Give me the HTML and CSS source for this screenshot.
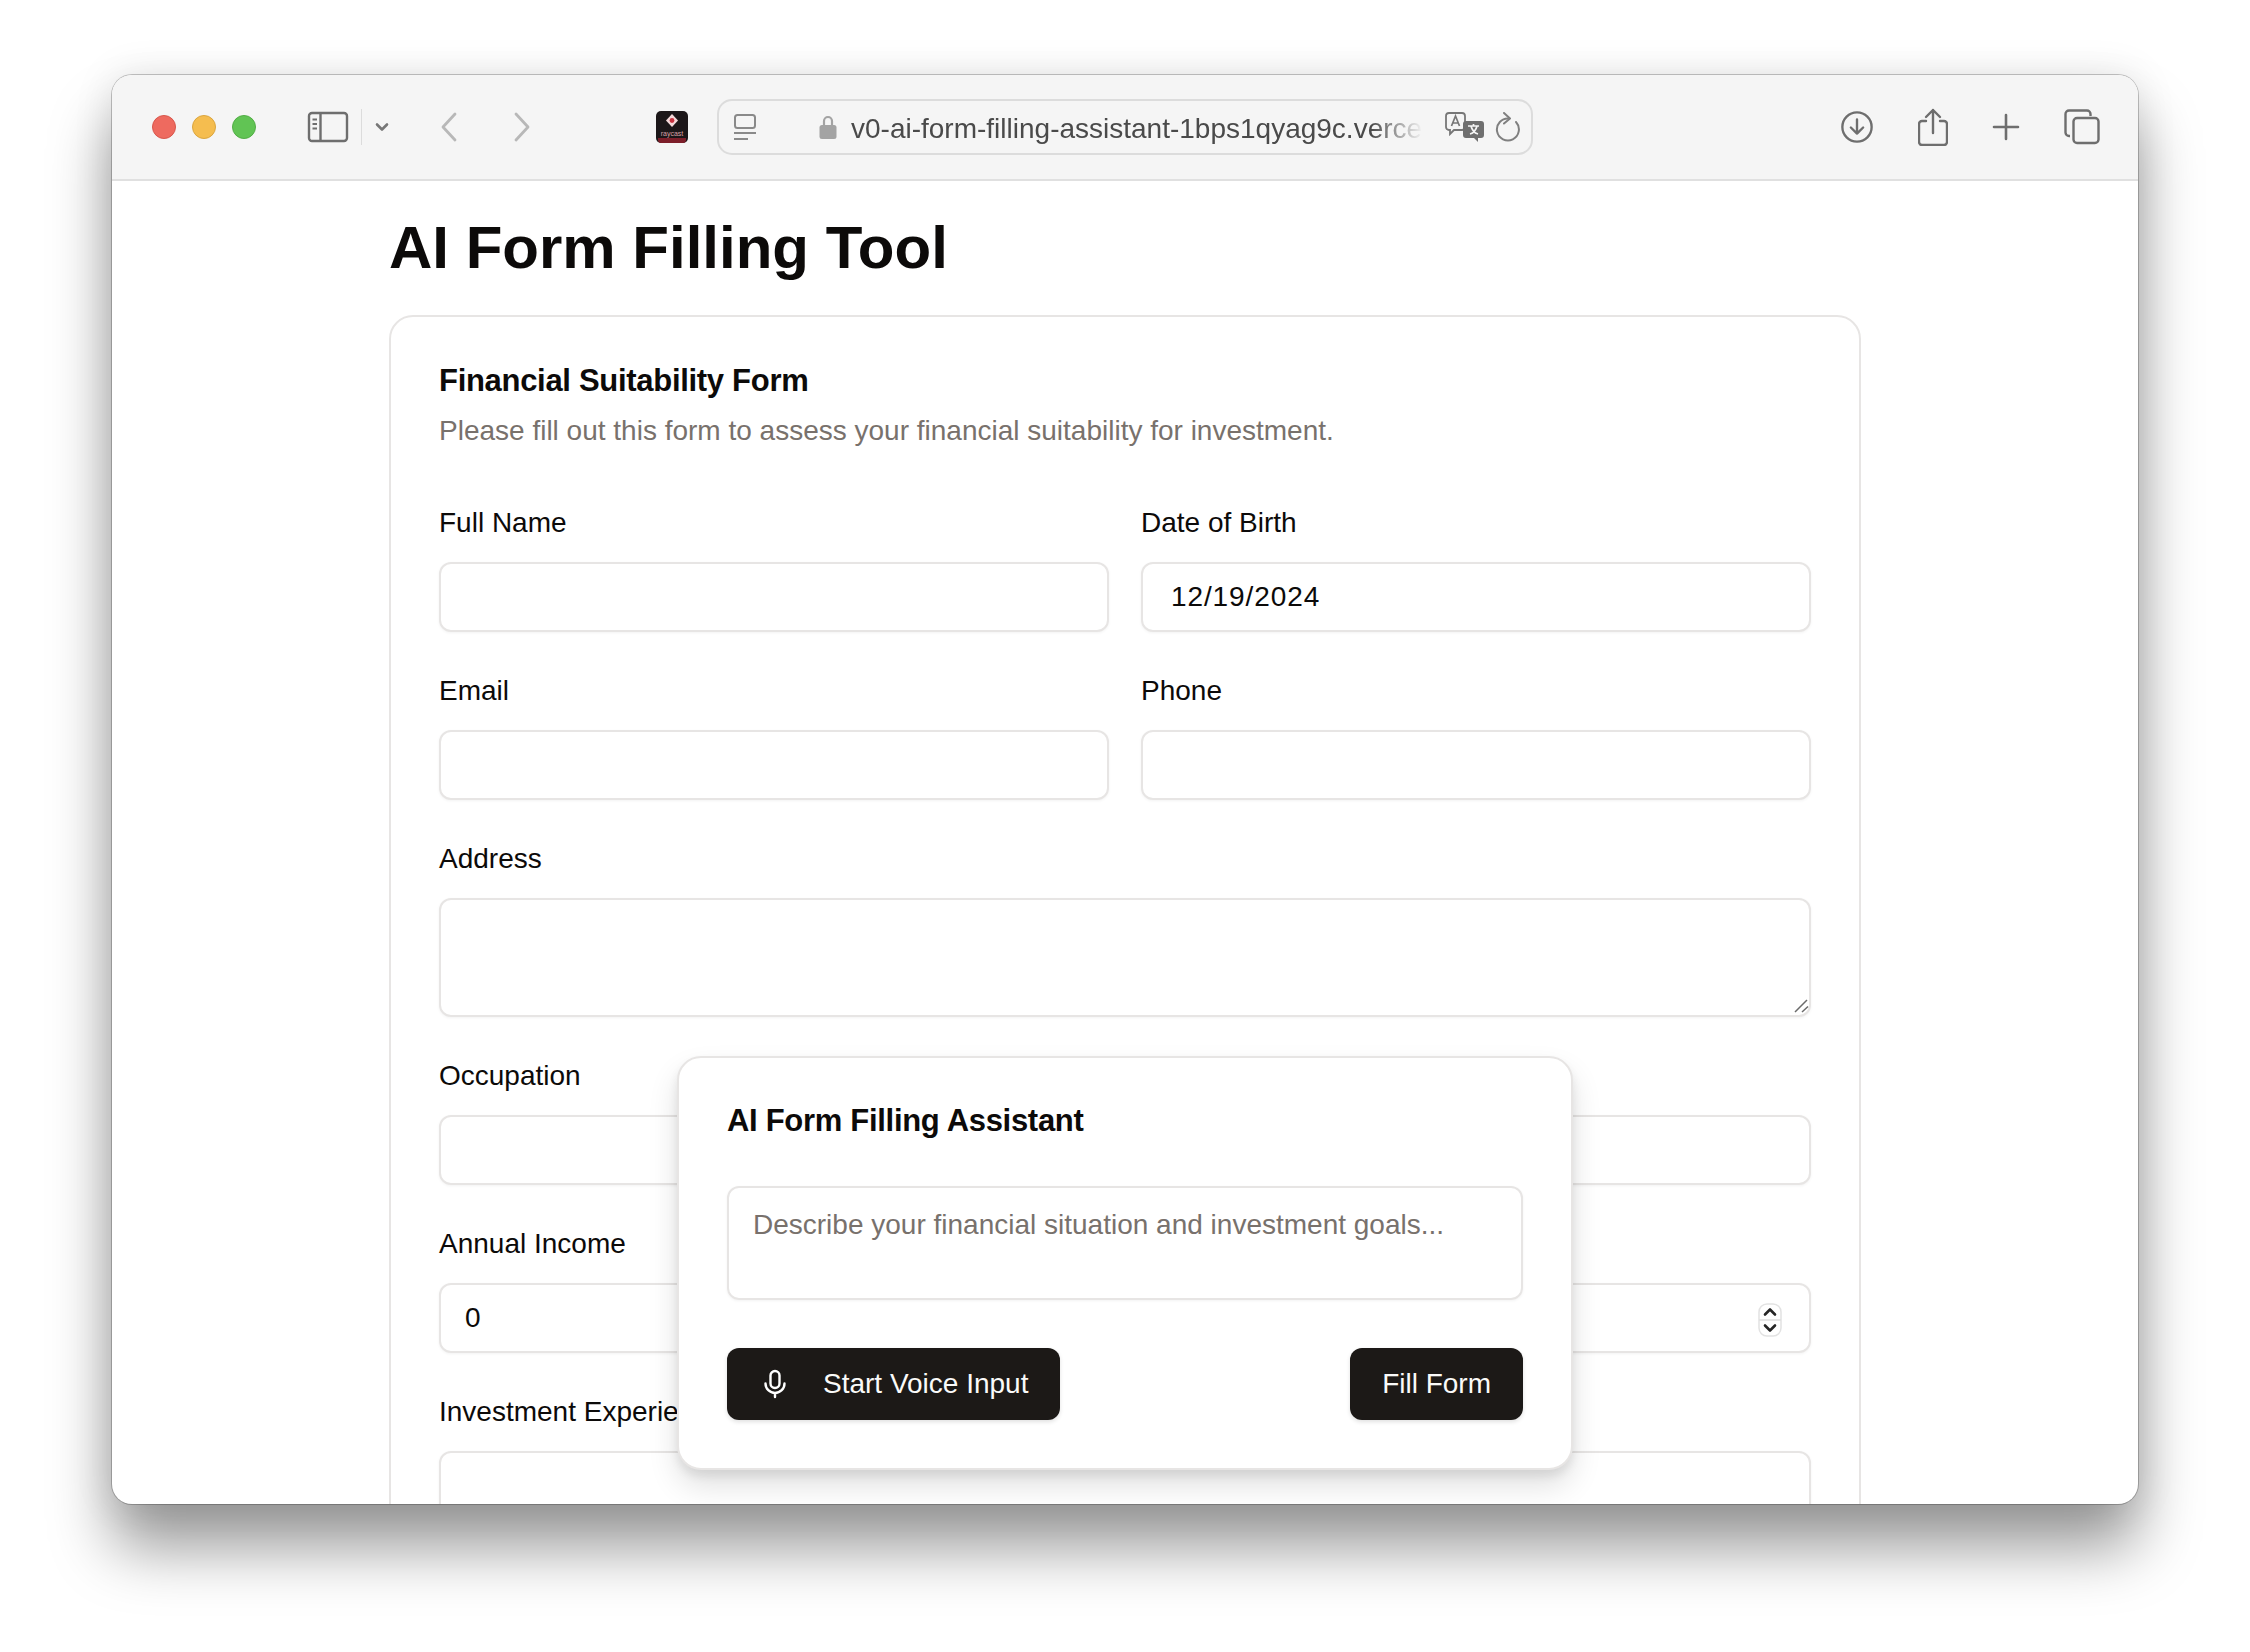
FILE: index.html
```html
<!DOCTYPE html>
<html lang="en">
<head>
<meta charset="utf-8">
<title>AI Form Filling Tool</title>
<link rel="stylesheet" href="styles.css">
</head>
<body>
<div class="window">
  <header class="toolbar">
    <div class="lights">
      <span class="light red"></span><span class="light yellow"></span><span class="light green"></span>
    </div>
    <svg class="ic sidebar" width="42" height="32" viewBox="0 0 42 32" fill="none" stroke="#6e6e6e" stroke-width="2.4"><rect x="2" y="2" width="38" height="28" rx="3"/><path d="M13.5 2v28"/><path d="M5.5 8.5h4.5M5.500 13h4.500M5.500 17.500h4.500" stroke-width="2"/></svg>
    <span class="sep"></span>
    <svg class="ic chev" width="14" height="10" viewBox="0 0 14 10" fill="none" stroke="#777" stroke-width="2.6" stroke-linecap="round" stroke-linejoin="round"><path d="M2 2.500l5 5 5-5"/></svg>
    <svg class="ic back" width="16" height="30" viewBox="0 0 16 30" fill="none" stroke="#b8b8b8" stroke-width="2.8" stroke-linecap="round" stroke-linejoin="round"><path d="M14 2L2 15l12 13"/></svg>
    <svg class="ic fwd" width="16" height="30" viewBox="0 0 16 30" fill="none" stroke="#b8b8b8" stroke-width="2.8" stroke-linecap="round" stroke-linejoin="round"><path d="M2 2l12 13L2 28"/></svg>
    <svg class="ic ray" width="32" height="32" viewBox="0 0 32 32"><rect width="32" height="32" rx="5" fill="#1c1719"/><path d="M2 27h28v2a3 3 0 0 1-3 3H5a3 3 0 0 1-3-3z" fill="#7d1f2a"/><path d="M16 3l6 6.500-6 6.500-6-6.500z" fill="#f4d9da"/><circle cx="16" cy="9.500" r="2.400" fill="#c8323f"/><text x="16" y="25" text-anchor="middle" font-size="7" font-family="Liberation Sans" fill="#d9a0a5">raycast</text></svg>
    <div class="urlbar">
      <svg class="ic reader" width="24" height="28" viewBox="0 0 24 28" fill="none" stroke="#8a8a8a" stroke-width="2"><rect x="2" y="2" width="20" height="13" rx="2.500"/><path d="M1 20h22M1 26h14"/></svg>
      <svg class="ic lock" width="18" height="26" viewBox="0 0 18 26"><path d="M5 12V7a4 4 0 0 1 8 0v5" fill="none" stroke="#a3a3a3" stroke-width="2.200"/><rect x="0.500" y="11" width="17" height="14" rx="2.500" fill="#a3a3a3"/></svg>
      <span class="url">v0-ai-form-filling-assistant-1bps1qyag9c.vercel</span>
      <svg class="ic translate" width="40" height="30" viewBox="0 0 40 30"><path d="M4 1h13a3 3 0 0 1 3 3v11a3 3 0 0 1-3 3H9l-4 4v-4H4a3 3 0 0 1-3-3V4a3 3 0 0 1 3-3z" fill="none" stroke="#777" stroke-width="1.800"/><path d="M6.500 14l4-10 4 10M8 11h5" fill="none" stroke="#777" stroke-width="1.700"/><path d="M21 9h15a3 3 0 0 1 3 3v11a3 3 0 0 1-3 3h-3v4l-4-4h-8a3 3 0 0 1-3-3V12a3 3 0 0 1 3-3z" fill="#6f6f6f"/><path d="M23 14h11M28.500 12v2M26 14c1 4 3.500 7 7 8M32 14c-1 4-3.500 7-7 8" fill="none" stroke="#f5f5f5" stroke-width="1.700"/></svg>
      <svg class="ic reload" width="26" height="30" viewBox="0 0 26 30" fill="none" stroke="#808080" stroke-width="2" stroke-linecap="round" stroke-linejoin="round"><path d="M15 6.500A11 11 0 1 0 22 10"/><path d="M10 1l6 5.500-6 5"/></svg>
    </div>
    <div class="actions">
      <svg class="ic" width="34" height="34" viewBox="0 0 36 36" fill="none" stroke="#6e6e6e" stroke-width="2.500" stroke-linecap="round" stroke-linejoin="round"><circle cx="18" cy="18" r="15.500"/><path d="M18 10v15M11.500 18.500L18 25l6.500-6.500"/></svg>
      <svg class="ic" width="30" height="38" viewBox="0 0 30 38" fill="none" stroke="#6e6e6e" stroke-width="2.400" stroke-linecap="round" stroke-linejoin="round"><path d="M8 13H4a3 3 0 0 0-3 3v18a3 3 0 0 0 3 3h22a3 3 0 0 0 3-3V16a3 3 0 0 0-3-3h-4"/><path d="M15 25V2M8 9l7-7 7 7"/></svg>
      <svg class="ic" width="28" height="28" viewBox="0 0 28 28" fill="none" stroke="#6e6e6e" stroke-width="2.600" stroke-linecap="round"><path d="M14 2v24M2 14h24"/></svg>
      <svg class="ic" width="36" height="36" viewBox="0 0 36 36" fill="none" stroke="#6e6e6e" stroke-width="2.400"><path d="M6 27H5a3.500 3.500 0 0 1-3.500-3.500V5A3.500 3.500 0 0 1 5 1.500h18A3.500 3.500 0 0 1 26.500 5v2"/><rect x="9.500" y="9" width="25" height="25" rx="3.500"/></svg>
    </div>
  </header>

  <main class="page">
    <h1 class="title">AI Form Filling Tool</h1>
    <section class="card">
      <h2 class="card-title">Financial Suitability Form</h2>
      <p class="card-sub">Please fill out this form to assess your financial suitability for investment.</p>
      <form class="grid">
        <div class="field"><label class="label">Full Name</label><input class="input" type="text"></div>
        <div class="field"><label class="label">Date of Birth</label><input class="input date" type="text" value="12/19/2024"></div>
        <div class="field"><label class="label">Email</label><input class="input" type="text"></div>
        <div class="field"><label class="label">Phone</label><input class="input" type="text"></div>
        <div class="field wide"><label class="label">Address</label>
          <div class="overlay-wrap"><textarea class="input area"></textarea>
            <svg class="grip" width="16" height="16" viewBox="0 0 16 16" fill="none" stroke="#6b6b6b" stroke-width="1.500"><path d="M1 13L13 1M8 13l6-5.500"/></svg>
          </div>
        </div>
        <div class="field"><label class="label">Occupation</label><input class="input" type="text"></div>
        <div class="field"><label class="label">&nbsp;</label><input class="input" type="text"></div>
        <div class="field"><label class="label">Annual Income</label><input class="input" type="text" value="0"></div>
        <div class="field"><label class="label">&nbsp;</label>
          <div class="overlay-wrap"><input class="input" type="text">
            <svg class="spin" width="24" height="34" viewBox="0 0 24 34" fill="#fff"><rect x="1" y="1" width="22" height="32" rx="8" stroke="#e2e2e2" stroke-width="1.500"/><path d="M1 17h22" stroke="#dedede" stroke-width="1.500"/><path d="M7 11.500L12 6.500l5 5M7 22.500L12 27.500l5-5" fill="none" stroke="#262626" stroke-width="2.600" stroke-linecap="round" stroke-linejoin="round"/></svg>
          </div>
        </div>
        <div class="field wide"><label class="label">Investment Experience</label><input class="input" type="text"></div>
      </form>
    </section>

    <aside class="assistant">
      <h2 class="assistant-title">AI Form Filling Assistant</h2>
      <div class="prompt">Describe your financial situation and investment goals...</div>
      <div class="assistant-actions">
        <button class="btn voice" type="button">
          <svg width="24" height="30" viewBox="0 0 24 30" fill="none" stroke="#fff" stroke-width="2.400" stroke-linecap="round" stroke-linejoin="round"><rect x="7.500" y="2" width="9" height="17" rx="4.500"/><path d="M2.500 14.500a9.500 9.500 0 0 0 19 0M12 24v4"/></svg>
          <span>Start Voice Input</span>
        </button>
        <button class="btn" type="button">Fill Form</button>
      </div>
    </aside>
  </main>
</div>
</body>
</html>
```

FILE: styles.css
```css
* { box-sizing: border-box; }
html, body { margin: 0; padding: 0; }
body {
  width: 2250px;
  height: 1652px;
  padding: 75px 112px 0;
  background: #fff;
  font-family: "Liberation Sans", Arial, sans-serif;
  overflow: hidden;
}
.window {
  width: 2026px;
  height: 1429px;
  background: #fff;
  border-radius: 20px;
  overflow: hidden;
  display: flex;
  flex-direction: column;
  box-shadow: 0 0 0 1px rgba(0,0,0,.22), 0 44px 62px rgba(0,0,0,.4), 0 0 40px rgba(0,0,0,.1);
}
.toolbar {
  height: 106px;
  flex: none;
  display: flex;
  align-items: center;
  background: #f5f5f5;
  border-bottom: 2px solid #e0e0e0;
}
.ic { flex: none; display: block; }
.lights { display: flex; gap: 16px; margin-left: 40px; }
.light { width: 24px; height: 24px; border-radius: 50%; }
.red { background: #ee6a5f; border: 1px solid #d8574c; }
.yellow { background: #f5bd4f; border: 1px solid #dba63f; }
.green { background: #61c454; border: 1px solid #52ad46; }
.sidebar { margin-left: 51px; }
.sep { width: 1px; height: 36px; background: #dcdcdc; margin-left: 12px; }
.chev { margin-left: 13px; }
.back { margin-left: 52px; }
.fwd { margin-left: 57px; }
.ray { margin-left: 126px; }
.urlbar {
  width: 816px;
  height: 56px;
  margin-left: 29px;
  display: flex;
  align-items: center;
  border: 2px solid #dcdcdc;
  border-radius: 15px;
  padding: 0 10px 0 14px;
}
.lock { margin-left: 62px; }
.url {
  width: 572px;
  margin-left: 14px;
  margin-top: 3px;
  flex: none;
  font-size: 28px;
  line-height: 36px;
  color: #4a4a4a;
  white-space: nowrap;
  -webkit-mask-image: linear-gradient(90deg, #000 91%, transparent 100%);
  mask-image: linear-gradient(90deg, #000 91%, transparent 100%);
}
.translate { margin-left: 22px; }
.reload { margin-left: 9px; }
.actions {
  display: flex;
  align-items: center;
  gap: 44px;
  margin-left: auto;
  margin-right: 38px;
}
.page {
  position: relative;
  flex: 1;
  min-height: 0;
  padding: 0 277px;
  overflow: hidden;
}
.title {
  margin: 0;
  padding-top: 33px;
  height: 134px;
  font-size: 60px;
  line-height: 68px;
  font-weight: 700;
  color: #0c0a09;
}
.card {
  border: 2px solid #e7e5e4;
  border-radius: 24px;
  padding: 42px 48px 48px;
  background: #fff;
}
.card-title {
  margin: 0;
  font-size: 31px;
  line-height: 44px;
  font-weight: 700;
  color: #0c0a09;
  letter-spacing: -0.3px;
}
.card-sub {
  margin: 8px 0 0;
  font-size: 28px;
  line-height: 40px;
  color: #78716c;
}
.grid {
  display: grid;
  grid-template-columns: 1fr 1fr;
  column-gap: 32px;
  row-gap: 45px;
  margin-top: 58px;
}
.field { display: flex; flex-direction: column; min-width: 0; }
.wide { grid-column: 1 / 3; }
.label {
  height: 28px;
  font-size: 28px;
  line-height: 28px;
  color: #0c0a09;
  margin-bottom: 25px;
}
.input {
  display: block;
  width: 100%;
  height: 70px;
  padding: 0 24px;
  border: 2px solid #e7e5e4;
  border-radius: 12px;
  background: #fff;
  font-family: inherit;
  font-size: 28px;
  color: #0c0a09;
  box-shadow: 0 1px 3px rgba(0,0,0,.05);
  outline: none;
}
.date { padding-left: 28px; letter-spacing: 0.9px; }
.area { height: 119px; resize: none; }
.overlay-wrap { position: relative; }
.spin { position: absolute; right: 29px; top: 20px; }
.grip { position: absolute; right: 1px; bottom: 2px; }
.assistant {
  position: absolute;
  left: 565px;
  top: 875px;
  width: 896px;
  height: 414px;
  padding: 41px 48px 48px;
  background: #fff;
  border: 2px solid #e7e5e4;
  border-radius: 24px;
  box-shadow: 0 16px 30px rgba(0,0,0,.12), 0 6px 10px rgba(0,0,0,.08);
  display: flex;
  flex-direction: column;
}
.assistant-title {
  margin: 0;
  font-size: 31px;
  line-height: 44px;
  font-weight: 700;
  color: #0c0a09;
  letter-spacing: -0.3px;
}
.prompt {
  margin-top: 43px;
  height: 118px;
  padding: 19px 24px;
  border: 2px solid #e7e5e4;
  border-radius: 12px;
  font-size: 28px;
  line-height: 36px;
  color: #78716c;
  box-shadow: 0 1px 3px rgba(0,0,0,.05);
}
.assistant-actions {
  display: flex;
  justify-content: space-between;
  margin-top: 48px;
}
.btn {
  height: 72px;
  padding: 0 32px;
  border: 0;
  border-radius: 12px;
  background: #1c1917;
  color: #fafaf9;
  font-family: inherit;
  font-size: 28px;
  display: flex;
  align-items: center;
  box-shadow: 0 2px 4px rgba(0,0,0,.12);
}
.voice { padding: 0 32px 0 36px; gap: 36px; }
```
